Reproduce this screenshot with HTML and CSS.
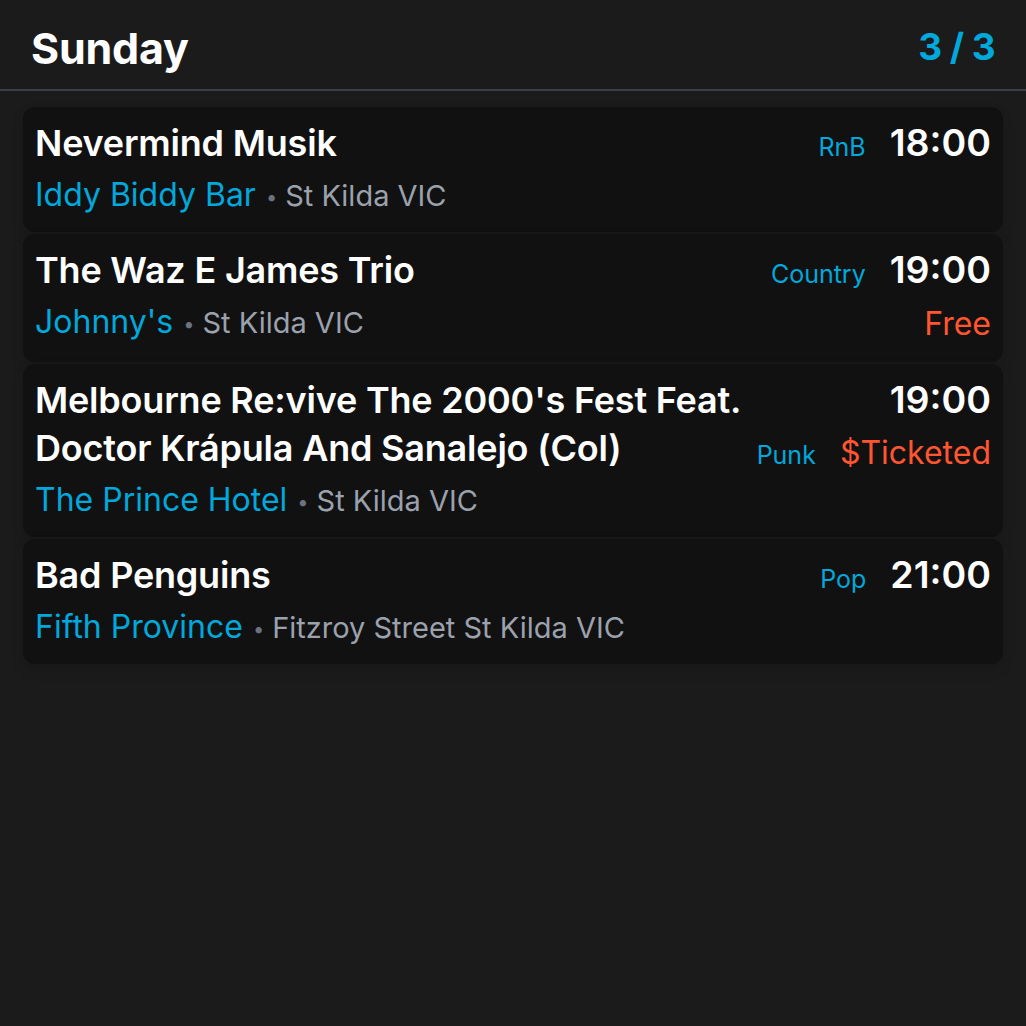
FILE: index.html
```html
<!DOCTYPE html>
<html lang="en">
<head>
<meta charset="utf-8">
<title>Sunday</title>
<link rel="stylesheet" href="styles.css">
</head>
<body>
<header class="day-header">
  <h1 class="day-title">Sunday</h1>
  <span class="day-count">3 / 3</span>
</header>
<main class="gig-list">
  <article class="gig">
    <div class="gig-main">
      <div class="gig-title">Nevermind Musik</div>
      <div class="gig-venue"><span class="venue-name">Iddy Biddy Bar</span><span class="dot">•</span><span class="venue-loc">St Kilda VIC</span></div>
    </div>
    <div class="gig-side">
      <div class="side-row"><span class="genre">RnB</span><span class="time">18:00</span></div>
    </div>
  </article>
  <article class="gig">
    <div class="gig-main">
      <div class="gig-title">The Waz E James Trio</div>
      <div class="gig-venue"><span class="venue-name">Johnny's</span><span class="dot">•</span><span class="venue-loc">St Kilda VIC</span></div>
    </div>
    <div class="gig-side">
      <div class="side-row"><span class="genre">Country</span><span class="time">19:00</span></div>
      <div class="side-row side-row-low"><span class="price">Free</span></div>
    </div>
  </article>
  <article class="gig">
    <div class="gig-main">
      <div class="gig-title">Melbourne Re:vive The 2000's Fest Feat. Doctor Krápula And Sanalejo (Col)</div>
      <div class="gig-venue"><span class="venue-name">The Prince Hotel</span><span class="dot">•</span><span class="venue-loc">St Kilda VIC</span></div>
    </div>
    <div class="gig-side">
      <div class="side-row"><span class="time">19:00</span></div>
      <div class="side-row side-row-mid"><span class="genre">Punk</span><span class="price">$Ticketed</span></div>
    </div>
  </article>
  <article class="gig">
    <div class="gig-main">
      <div class="gig-title">Bad Penguins</div>
      <div class="gig-venue"><span class="venue-name">Fifth Province</span><span class="dot">•</span><span class="venue-loc">Fitzroy Street St Kilda VIC</span></div>
    </div>
    <div class="gig-side">
      <div class="side-row"><span class="genre">Pop</span><span class="time">21:00</span></div>
    </div>
  </article>
</main>
</body>
</html>
```

FILE: styles.css
```css
* { box-sizing: border-box; }
html, body {
  margin: 0;
  background: #1b1b1b;
}
body {
  font-family: Inter, "Noto Sans", "Liberation Sans", sans-serif;
  color: #ffffff;
  min-height: 1026px;
}
.day-header {
  height: 91px;
  padding: 6px 31px 0 31px;
  display: flex;
  align-items: center;
  justify-content: space-between;
  border-bottom: 2px solid #3a404b;
}
.day-title {
  margin: 0;
  font-size: 43px;
  font-weight: 700;
  letter-spacing: -0.2px;
  color: #ffffff;
}
.day-count {
  font-size: 37px;
  font-weight: 700;
  letter-spacing: -0.6px;
  color: #00a8dc;
  margin-bottom: 3px;
}
.gig-list {
  padding: 16px 23px;
  display: flex;
  flex-direction: column;
  gap: 2px;
}
.gig {
  background: #111111;
  border-radius: 12px;
  padding: 12px;
  display: flex;
  justify-content: space-between;
  gap: 8px;
  box-shadow: 0 6px 14px rgba(0,0,0,0.12);
}
.gig-main {
  flex: 1;
  min-width: 0;
}
.gig-title {
  font-size: 36px;
  font-weight: 600;
  line-height: 48px;
  letter-spacing: -0.2px;
}
.gig-venue {
  margin-top: 3px;
  line-height: 50px;
  font-size: 32px;
}
.venue-name {
  color: #00a8dc;
  font-size: 32px;
  line-height: 1;
}
.dot {
  color: #6b7280;
  font-size: 20px;
  margin: 0 8px 0 10px;
  vertical-align: 2px;
  line-height: 1;
}
.venue-loc {
  color: #9ba1ad;
  font-size: 29px;
  line-height: 1;
}
.gig-side {
  display: flex;
  flex-direction: column;
  align-items: flex-end;
}
.side-row {
  display: flex;
  align-items: baseline;
  gap: 24px;
  line-height: 48px;
}
.side-row-low { margin-top: 4px; line-height: 52px; }
.side-row-mid { margin-top: 4px; line-height: 50px; }
.genre {
  color: #00a8dc;
  font-size: 25px;
  line-height: 1;
}
.time {
  font-size: 37.5px;
  font-weight: 600;
}
.price {
  color: #ff5530;
  font-size: 32px;
}
```
